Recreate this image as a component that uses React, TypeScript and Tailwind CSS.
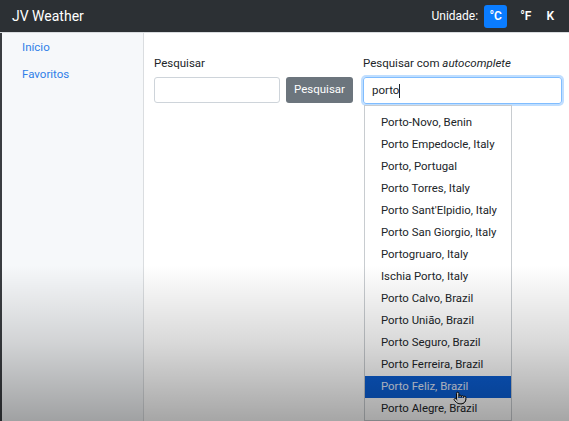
import React from "react";
import { Pointer } from "lucide-react";

const items = [
  "Porto-Novo, Benin",
  "Porto Empedocle, Italy",
  "Porto, Portugal",
  "Porto Torres, Italy",
  "Porto Sant'Elpidio, Italy",
  "Porto San Giorgio, Italy",
  "Portogruaro, Italy",
  "Ischia Porto, Italy",
  "Porto Calvo, Brazil",
  "Porto União, Brazil",
  "Porto Seguro, Brazil",
  "Porto Ferreira, Brazil",
  "Porto Feliz, Brazil",
  "Porto Alegre, Brazil",
];

export default function App() {
  return (
    <div
      className="relative w-[569px] h-[421px] overflow-hidden bg-white text-[#212529]"
      style={{ fontFamily: "Roboto, 'Liberation Sans', sans-serif" }}
    >
      <header className="h-[33px] bg-[#2c3034] flex items-center justify-between pl-[12px] pr-[15px] border-b border-[#d9dcdf]">
        <span className="text-white text-[14px]">JV Weather</span>
        <div className="flex items-center text-white text-[12px]">
          <span className="mr-[6px]">Unidade:</span>
          <span className="w-[23px] h-[23px] rounded-[3px] bg-[#0a7cff] flex items-center justify-center font-semibold">°C</span>
          <span className="ml-[13px] font-semibold">°F</span>
          <span className="ml-[15px] font-semibold">K</span>
        </div>
      </header>
      <div className="flex h-[388px]">
        <aside className="w-[144px] bg-[#f6f8fa] border-l-[2px] border-l-[#3a3d41] border-r border-r-[#dadde0] pl-[20px] pt-[6px] flex flex-col">
          <a className="text-[#2f7fe8] text-[11.5px] h-[27px] leading-[16px]">Início</a>
          <a className="text-[#2f7fe8] text-[11.5px] h-[27px] leading-[16px]">Favoritos</a>
        </aside>
        <main className="flex-1 pl-[10px] pt-[22px] flex">
          <div className="flex flex-col">
            <label className="text-[11.5px] h-[22px] leading-[16px]">Pesquisar</label>
            <div className="flex">
              <input className="w-[126px] h-[26px] border border-[#ced4da] rounded-[3px] bg-white" />
              <button className="ml-[6px] w-[67px] h-[26px] bg-[#6c757d] text-white text-[11.5px] rounded-[3px]">Pesquisar</button>
            </div>
          </div>
          <div className="flex flex-col ml-[10px] relative">
            <label className="text-[11.5px] h-[22px] leading-[16px]">
              Pesquisar com <i>autocomplete</i>
            </label>
            <div className="w-[199px] h-[27px] border border-[#80bdff] rounded-[3px] shadow-[0_0_0_2px_rgba(0,123,255,0.25)] flex items-center pl-[8px] text-[11.5px]">
              porto<span className="w-px h-[14px] bg-[#212529]" />
            </div>
            <ul className="absolute top-[50px] left-[1px] w-[148px] bg-white border border-[#c8ccd0] pt-[6px] text-[11.4px]">
              {items.map((it) => (
                <li
                  key={it}
                  className={
                    "h-[22px] flex items-center pl-[16px] " +
                    (it === "Porto Feliz, Brazil" ? "bg-[#0b5fd6] text-[#e3ebfb]" : "text-[#212529]")
                  }
                >
                  {it}
                </li>
              ))}
            </ul>
          </div>
        </main>
      </div>
      <Pointer className="absolute left-[453px] top-[391px] w-[14px] h-[14px] text-black fill-white" strokeWidth={1.6} />
      <div className="absolute left-0 right-0 top-[265px] bottom-0 pointer-events-none bg-gradient-to-b from-transparent via-black/15 to-black/35" />
    </div>
  );
}
